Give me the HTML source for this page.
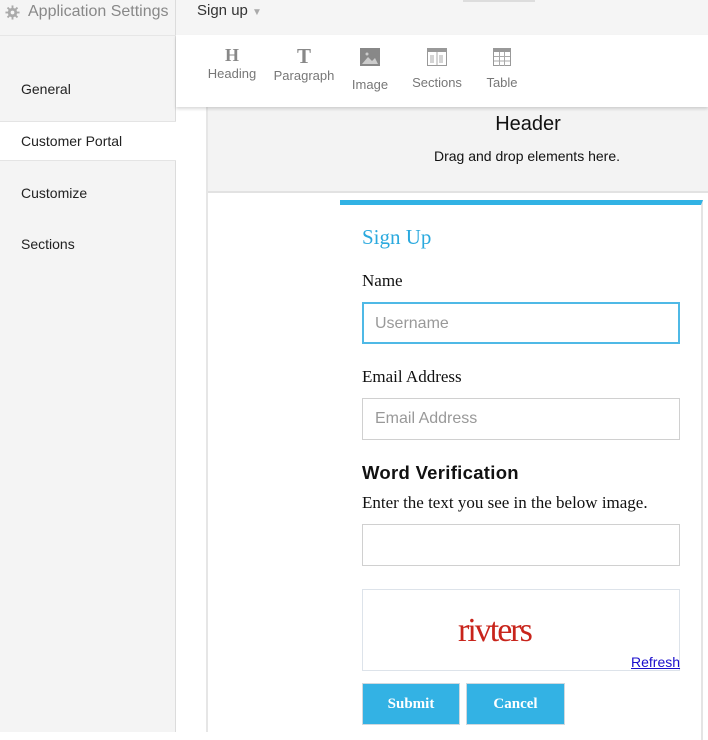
<!DOCTYPE html>
<html><head><meta charset="utf-8"><style>
*{box-sizing:border-box;margin:0;padding:0}
body{width:708px;height:732px;overflow:hidden;background:#fff;font-family:"Liberation Sans",sans-serif;position:relative}
.abs{position:absolute}
.side{left:0;top:0;width:176px;height:732px;background:#f4f4f4;border-right:1px solid #dcdcdc}
.sitem{left:21px;font-size:14px;color:#222}
.tb{position:absolute;text-align:center;font-size:13px;color:#777}
.lbl{font-family:"Liberation Serif",serif;font-size:17px;color:#111;position:absolute;left:362px}
.inp{position:absolute;left:362px;width:318px;height:42px;border:1px solid #d0d0d0;font-size:16px;color:#999;padding:11px 0 0 12px}
.btn{position:absolute;top:683px;height:42px;background:#33b2e4;border:1px solid #cfd8de;color:#fff;font-family:"Liberation Serif",serif;font-weight:bold;font-size:15px;text-align:center;line-height:40px}
</style></head><body>
<div class="abs" style="left:0;top:0;width:708px;height:35px;background:#f5f5f5"></div>
<div class="abs side"></div>
<div class="abs" style="left:0;top:35px;width:176px;height:1px;background:#e6e6e6"></div>
<svg class="abs" style="left:5px;top:5px" width="15" height="15" viewBox="0 0 16 16"><g fill="#aaa"><circle cx="8" cy="8" r="5"/><rect x="7" y="0.5" width="2" height="15"/><rect x="0.5" y="7" width="15" height="2"/><rect x="7" y="0.5" width="2" height="15" transform="rotate(45 8 8)"/><rect x="7" y="0.5" width="2" height="15" transform="rotate(-45 8 8)"/></g><circle cx="8" cy="8" r="2" fill="#f5f5f5"/></svg>
<div class="abs" style="left:28px;top:3px;font-size:16px;color:#888">Application Settings</div>
<div class="abs" style="left:197px;top:2px;font-size:15px;color:#333">Sign up <span style="color:#aaa;font-size:10px">&#9660;</span></div>
<div class="abs" style="left:463px;top:0;width:72px;height:2px;background:#ddd"></div>
<div class="abs sitem" style="top:81px">General</div>
<div class="abs" style="left:0;top:121px;width:176px;height:40px;background:#fff;border-top:1px solid #e4e4e4;border-bottom:1px solid #e4e4e4"></div>
<div class="abs sitem" style="top:133px">Customer Portal</div>
<div class="abs sitem" style="top:185px">Customize</div>
<div class="abs sitem" style="top:236px">Sections</div>
<div class="abs" style="left:177px;top:107px;width:30px;height:625px;background:#fff"></div>
<div class="abs" style="left:206px;top:107px;width:502px;height:625px;background:#fff;border-left:2px solid #e6e6e6"></div>
<div class="abs" style="left:208px;top:107px;width:500px;height:86px;background:#f3f3f3;border-bottom:2px solid #e2e2e2"></div>
<div class="abs" style="left:400px;top:113px;width:256px;text-align:center;font-size:20px;color:#111">Header</div>
<div class="abs" style="left:400px;top:148px;width:254px;text-align:center;font-size:14px;color:#111">Drag and drop elements here.</div>
<div class="abs" style="left:176px;top:35px;width:532px;height:72px;background:#fff;box-shadow:0 2px 3px rgba(0,0,0,.15)"></div>
<div class="tb" style="left:205px;top:44px;width:54px"><div style="font-family:'Liberation Serif',serif;font-weight:bold;font-size:18px;color:#888;line-height:22px">H</div>Heading</div>
<div class="tb" style="left:270px;top:44px;width:68px"><div style="font-family:'Liberation Serif',serif;font-weight:bold;font-size:21px;color:#888;line-height:24px">T</div>Paragraph</div>
<div class="tb" style="left:348px;top:48px;width:44px"><svg width="20" height="18" viewBox="0 0 20 18"><rect width="20" height="18" fill="#888"/><path d="M2 16L8 9l4 4 3-3 3 6z" fill="#ccc"/><circle cx="7" cy="6" r="1.5" fill="#ccc"/></svg><div style="margin-top:8px">Image</div></div>
<div class="tb" style="left:408px;top:48px;width:58px"><svg width="20" height="18" viewBox="0 0 20 18"><rect x=".5" y=".5" width="19" height="17" fill="#fff" stroke="#999"/><rect x="1" y="1" width="18" height="3" fill="#999"/><path d="M10 4v13M4 7v8M6 7v8M13 7v8M15 7v8" stroke="#aaa"/></svg><div style="margin-top:6px">Sections</div></div>
<div class="tb" style="left:482px;top:48px;width:40px"><svg width="18" height="18" viewBox="0 0 18 18"><rect x=".5" y=".5" width="17" height="17" fill="#fff" stroke="#999"/><rect x="1" y="1" width="16" height="3" fill="#999"/><path d="M1 8.5h16M1 13h16M6.5 4v14M11.5 4v14" stroke="#aaa"/></svg><div style="margin-top:6px">Table</div></div>
<div class="abs" style="left:340px;top:200px;width:363px;height:540px;background:#fff;border-top:5px solid #31b2e4;border-right:2px solid #e4e4e4"></div>
<div class="abs" style="left:362px;top:225px;font-family:'Liberation Serif',serif;font-size:21px;color:#2aa9de">Sign Up</div>
<div class="lbl" style="top:271px">Name</div>
<div class="inp" style="top:302px;border:2px solid #4fb9e6;padding-left:11px;padding-top:11px">Username</div>
<div class="lbl" style="top:367px">Email Address</div>
<div class="inp" style="top:398px">Email Address</div>
<div class="abs" style="left:362px;top:462px;font-size:18.5px;font-weight:bold;color:#111;letter-spacing:.3px">Word Verification</div>
<div class="lbl" style="top:493px">Enter the text you see in the below image.</div>
<div class="inp" style="top:524px"></div>
<div class="abs" style="left:362px;top:589px;width:318px;height:82px;border:1px solid #dde3ea"></div>
<div class="abs" style="left:458px;top:612px;font-family:'Liberation Serif',serif;font-size:34px;color:#c8241b;letter-spacing:-2px;transform:scaleX(1.0);transform-origin:left">rivters</div>
<div class="abs" style="left:631px;top:654px;font-size:14px;color:#1a0dcc;text-decoration:underline">Refresh</div>
<div class="btn" style="left:362px;width:98px">Submit</div>
<div class="btn" style="left:466px;width:99px">Cancel</div>
</body></html>
